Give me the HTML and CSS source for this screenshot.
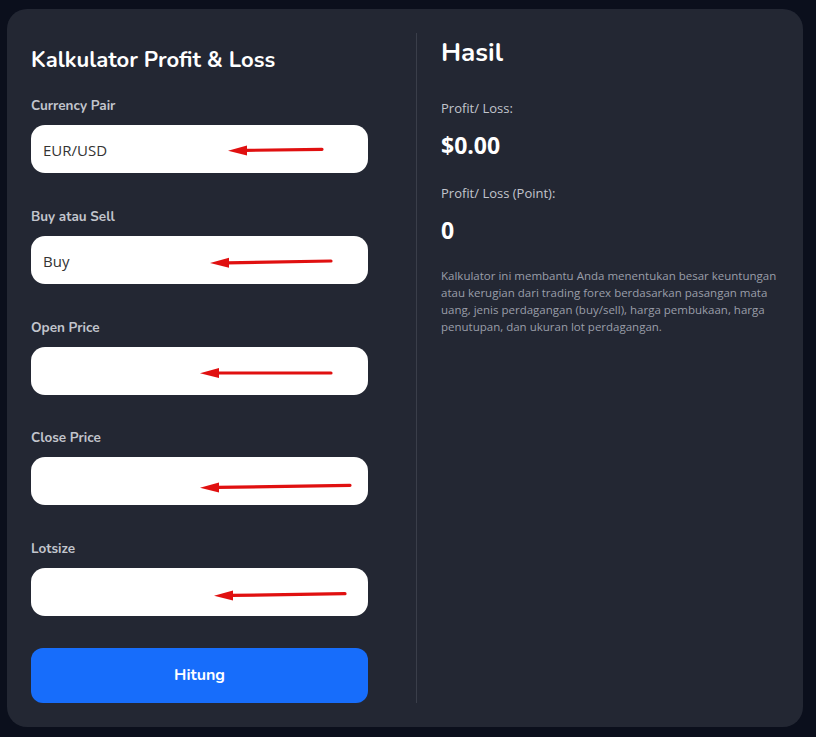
FILE: index.html
```html
<!DOCTYPE html>
<html lang="id">
<head>
  <meta charset="UTF-8">
  <meta name="viewport" content="width=device-width, initial-scale=1.0">
  <title>Kalkulator Profit &amp; Loss</title>
  <link rel="stylesheet" href="styles.css">
</head>
<body>
  <div class="card">
    <div class="form-panel">
      <h1>Kalkulator Profit &amp; Loss</h1>

      <form id="plForm">
        <div class="field">
          <label for="pair">Currency Pair</label>
          <div class="input-wrap">
            <input type="text" id="pair" value="EUR/USD">
            <svg class="arrow" viewBox="0 0 337 48"><line x1="214" y1="25.4" x2="291" y2="24.3"/><polygon points="197,25.7 216,20.4 216,30.6"/></svg>
          </div>
        </div>

        <div class="field">
          <label for="side">Buy atau Sell</label>
          <div class="input-wrap">
            <select id="side">
              <option>Buy</option>
              <option>Sell</option>
            </select>
            <svg class="arrow" viewBox="0 0 337 48"><line x1="196" y1="26.8" x2="300" y2="25"/><polygon points="179,27 198,21.8 198,31.8"/></svg>
          </div>
        </div>

        <div class="field">
          <label for="openPrice">Open Price</label>
          <div class="input-wrap">
            <input type="text" id="openPrice">
            <svg class="arrow" viewBox="0 0 337 48"><line x1="186" y1="26" x2="300" y2="26"/><polygon points="169,26.2 188,21 188,31"/></svg>
          </div>
        </div>

        <div class="field">
          <label for="closePrice">Close Price</label>
          <div class="input-wrap">
            <input type="text" id="closePrice">
            <svg class="arrow" viewBox="0 0 337 48"><line x1="186" y1="30.4" x2="319" y2="28.3"/><polygon points="169,30.7 188,25.5 188,35.5"/></svg>
          </div>
        </div>

        <div class="field">
          <label for="lotsize">Lotsize</label>
          <div class="input-wrap">
            <input type="text" id="lotsize">
            <svg class="arrow" viewBox="0 0 337 48"><line x1="200" y1="27.4" x2="314" y2="25.7"/><polygon points="183,27.7 202,22.5 202,32.5"/></svg>
          </div>
        </div>

        <button type="button" onclick="hitung()">Hitung</button>
      </form>
    </div>

    <div class="result-panel">
      <h2>Hasil</h2>
      <p class="result-label">Profit/ Loss:</p>
      <p class="result-value" id="plValue">$0.00</p>
      <p class="result-label">Profit/ Loss (Point):</p>
      <p class="result-value" id="pointValue">0</p>
      <p class="desc">Kalkulator ini membantu Anda menentukan besar keuntungan atau kerugian dari trading forex berdasarkan pasangan mata uang, jenis perdagangan (buy/sell), harga pembukaan, harga penutupan, dan ukuran lot perdagangan.</p>
    </div>
  </div>

  <script>
    function hitung() {
      const pair = document.getElementById('pair').value.toUpperCase();
      const side = document.getElementById('side').value;
      const open = parseFloat(document.getElementById('openPrice').value);
      const close = parseFloat(document.getElementById('closePrice').value);
      const lot = parseFloat(document.getElementById('lotsize').value);

      if (isNaN(open) || isNaN(close) || isNaN(lot)) {
        return;
      }

      // JPY pairs use 2 decimals
      const pipSize = pair.indexOf('JPY') !== -1 ? 0.01 : 0.0001;
      let diff = close - open;
      if (side === 'Sell') {
        diff = -diff;
      }

      const points = diff / pipSize;
      const profit = points * 10 * lot;

      document.getElementById('pointValue').textContent = points.toFixed(1);
      document.getElementById('plValue').textContent = (profit < 0 ? '-$' : '$') + Math.abs(profit).toFixed(2);
    }
  </script>
</body>
</html>
```

FILE: styles.css
```css
body {
  margin: 0;
  padding: 9px 13px 10px 7px;
  background-color: #0b0f1c;
  font-family: "Open Sans", Arial, sans-serif;
}

.card {
  display: flex;
  background-color: #232733;
  border-radius: 20px;
  padding: 24px;
  height: 670px;
}

.form-panel {
  width: 337px;
  padding-right: 48px;
  border-right: 1px solid #3a3e4a;
}

h1 {
  font-family: "Nunito", Lato, sans-serif;
  font-size: 22px;
  font-weight: 700;
  color: #ffffff;
  line-height: 30px;
  margin: 12px 0 22px;
}

.field {
  margin-bottom: 34.75px;
}

label {
  display: block;
  font-family: "Nunito", Lato, sans-serif;
  font-size: 13.5px;
  font-weight: 700;
  color: #c2c5cd;
  line-height: 17px;
  margin-bottom: 11px;
}

.input-wrap {
  position: relative;
}

input,
select {
  display: block;
  box-sizing: border-box;
  width: 100%;
  height: 48px;
  padding: 2px 12px 0;
  border: none;
  border-radius: 14px;
  background-color: #ffffff;
  color: #333333;
  font-family: "Open Sans", Arial, sans-serif;
  font-size: 15px;
  outline: none;
  appearance: none;
}

.arrow {
  position: absolute;
  left: 0;
  top: 0;
  width: 337px;
  height: 48px;
  pointer-events: none;
}

.arrow line {
  stroke: #e01010;
  stroke-width: 3.2;
  stroke-linecap: round;
}

.arrow polygon {
  fill: #e01010;
}

button {
  display: block;
  width: 100%;
  height: 55px;
  margin-top: -3px;
  border: none;
  border-radius: 12px;
  background-color: #176dfb;
  color: #ffffff;
  font-family: "Nunito", Lato, sans-serif;
  font-size: 16px;
  font-weight: 700;
  cursor: pointer;
}

button:hover {
  background-color: #0f5fe0;
}

.result-panel {
  flex: 1;
  padding-left: 24px;
}

h2 {
  font-family: "Nunito", Lato, sans-serif;
  font-size: 26px;
  font-weight: 700;
  color: #ffffff;
  line-height: 34px;
  margin: 3px 0 29px;
}

.result-label {
  font-size: 13px;
  color: #c2c5cd;
  margin: 0 0 12px;
  line-height: 18px;
}

.result-value {
  font-size: 23px;
  font-weight: 700;
  color: #ffffff;
  margin: 0;
  line-height: 32px;
}

.result-value + .result-label {
  margin-top: 23px;
}

.desc {
  font-size: 11.5px;
  line-height: 17px;
  color: #9a9ea9;
  margin: 21px 0 0;
}
```
